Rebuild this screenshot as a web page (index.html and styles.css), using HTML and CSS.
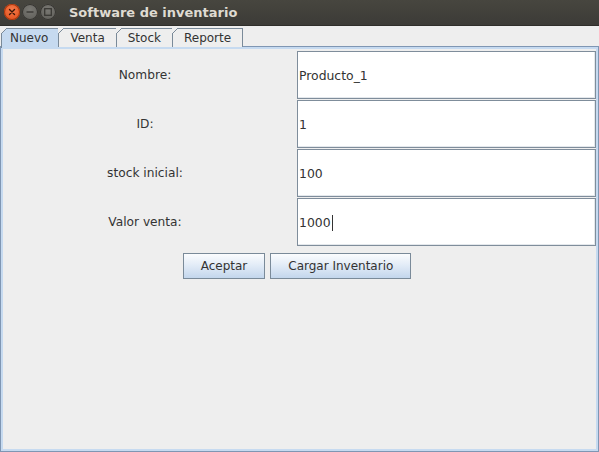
FILE: index.html
```html
<!DOCTYPE html>
<html lang="es">
<head>
<meta charset="utf-8">
<title>Software de inventario</title>
<link rel="stylesheet" href="styles.css">
</head>
<body>
<div class="window">
  <header class="titlebar">
    <div class="controls">
      <span class="wbtn close"><svg width="16" height="16" viewBox="0 0 16 16"><path d="M5.5 5.5 L10.5 10.5 M10.5 5.5 L5.5 10.5" stroke="#3a1608" stroke-width="1.4" stroke-linecap="round"/></svg></span>
      <span class="wbtn"><svg width="16" height="16" viewBox="0 0 16 16"><path d="M4.5 8 H11.5" stroke="#3a3935" stroke-width="1.4"/></svg></span>
      <span class="wbtn"><svg width="16" height="16" viewBox="0 0 16 16"><rect x="4.7" y="4.7" width="6.6" height="6.6" fill="none" stroke="#3a3935" stroke-width="1.3"/></svg></span>
    </div>
    <div class="title">Software de inventario</div>
  </header>
  <nav class="tabs">
    <div class="tab active">Nuevo</div>
    <div class="tab">Venta</div>
    <div class="tab">Stock</div>
    <div class="tab last">Reporte</div>
  </nav>
  <main class="panel">
    <div class="panel-inner">
      <div class="form">
        <div class="label">Nombre:</div>
        <div class="field">Producto_1</div>
        <div class="label">ID:</div>
        <div class="field">1</div>
        <div class="label">stock inicial:</div>
        <div class="field">100</div>
        <div class="label">Valor venta:</div>
        <div class="field">1000<span class="caret"></span></div>
      </div>
      <div class="actions">
        <button class="btn">Aceptar</button>
        <button class="btn">Cargar Inventario</button>
      </div>
    </div>
  </main>
</div>
</body>
</html>
```

FILE: styles.css
```css
* { box-sizing: border-box; }
html, body { margin: 0; padding: 0; }
body {
  width: 599px;
  height: 452px;
  overflow: hidden;
  background: #eeeeee;
  font-family: "DejaVu Sans", "Liberation Sans", sans-serif;
  font-size: 12px;
  color: #333333;
}
.window {
  width: 599px;
  height: 452px;
  display: flex;
  flex-direction: column;
  background: #eeeeee;
}
.titlebar {
  height: 26px;
  flex: none;
  display: flex;
  align-items: center;
  background: linear-gradient(#47463f, #3c3b37);
  border-bottom: 1px solid #2f2e2a;
}
.controls {
  display: flex;
  gap: 2px;
  padding-left: 4px;
  margin-top: -1px;
}
.wbtn {
  width: 16px;
  height: 16px;
  border-radius: 50%;
  background: radial-gradient(circle at 50% 35%, #7a7974, #5b5a55);
  box-shadow: inset 0 0 0 1px #353430;
  display: flex;
}
.wbtn.close {
  background: radial-gradient(circle at 50% 35%, #f47a4a, #df4a16);
  box-shadow: inset 0 0 0 1px #a8380f;
}
.title {
  margin-left: 13px;
  font-weight: bold;
  font-size: 13px;
  color: #dfdbd2;
  margin-top: -1px;
}
.tabs {
  flex: none;
  display: flex;
  padding: 2px 0 0 1px;
  height: 20px;
  position: relative;
  z-index: 1;
}
.tab {
  position: relative;
  height: 19px;
  padding: 1px 11px 0;
  line-height: 17px;
  border-top: 1px solid #7a8a99;
  border-left: 1px solid #7a8a99;
  background: #eeeeee;
  color: #333333;
}
.tab::before {
  content: "";
  position: absolute;
  top: -1px;
  left: -1px;
  width: 6px;
  height: 6px;
  background: linear-gradient(to bottom right, #eeeeee calc(50% - 0.7px), #7a8a99 calc(50% - 0.7px), #7a8a99 calc(50% + 0.7px), transparent calc(50% + 0.7px));
}
.tab.last { border-right: 1px solid #7a8a99; }
.tab.active {
  padding: 1px 10px 0 8px;
  background: #c6daf0;
  height: 20px;
}
.panel {
  flex: 1;
  border: 1px solid #7f96b3;
  display: flex;
}
.panel-inner {
  flex: 1;
  border: 2px solid #c6daf0;
  padding-top: 2px;
}
.form {
  display: grid;
  grid-template-columns: 294px 1fr;
  grid-auto-rows: 48px;
  row-gap: 1px;
}
.label {
  display: flex;
  align-items: center;
  justify-content: center;
  padding-right: 10px;
  font-size: 12.2px;
}
.field {
  display: flex;
  align-items: center;
  background: #ffffff;
  border: 1px solid #7f8d9b;
  box-shadow: inset -1px -1px 0 #e4e8ec;
  padding-left: 1px;
  padding-top: 1px;
  font-size: 12.4px;
  color: #333333;
}
.caret {
  display: inline-block;
  width: 1px;
  height: 16px;
  background: #333333;
  margin-left: 1px;
}
.actions {
  display: flex;
  justify-content: center;
  gap: 5px;
  margin-top: 7px;
  padding-right: 5px;
}
.btn {
  height: 26px;
  padding: 0 17px;
  font-family: "DejaVu Sans", "Liberation Sans", sans-serif;
  font-size: 12px;
  color: #333333;
  border: 1px solid #7a8a99;
  border-radius: 0;
  background: linear-gradient(#fbfcfe, #e3ecf7 45%, #c3d6ec);
}
```
